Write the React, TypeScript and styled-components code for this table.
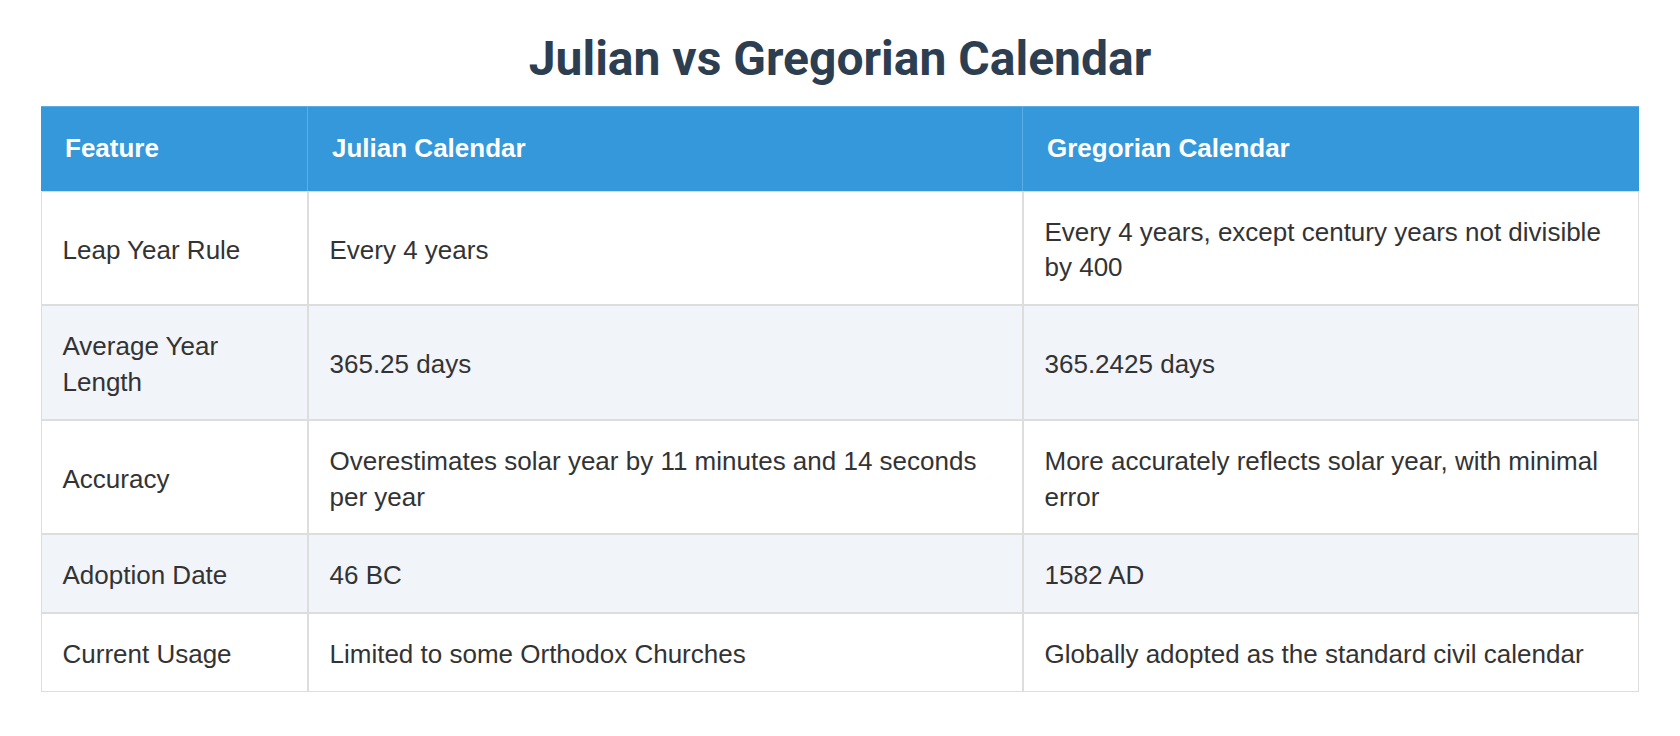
import React from "react";
import styled, { createGlobalStyle } from "styled-components";

const GlobalStyle = createGlobalStyle`
  html, body {
    margin: 0;
    padding: 0;
    background: #ffffff;
  }
  body {
    font-family: "Liberation Sans", Arial, sans-serif;
    color: #333333;
  }
`;

const Page = styled.main`
  padding: 31px 41px 40px;
  box-sizing: border-box;
  width: 1680px;
`;

const Title = styled.h1`
  margin: 0 0 19px;
  text-align: center;
  font-family: Roboto, "Liberation Sans", sans-serif;
  font-weight: 700;
  font-size: 48px;
  line-height: 56px;
  color: #2c3e50;
`;

const Table = styled.table`
  width: 100%;
  border-collapse: separate;
  border-spacing: 0;
  table-layout: fixed;
  font-size: 26px;
  line-height: 35.6px;
`;

const HeadCell = styled.th<{ $last?: boolean }>`
  background: #3498db;
  color: #ffffff;
  font-weight: 700;
  text-align: left;
  padding: 24px;
  border-top: 1px solid #5dade2;
  border-right: ${(p) => (p.$last ? "none" : "1px solid #5dade2")};
`;

const Row = styled.tr<{ $alt?: boolean }>`
  background: ${(p) => (p.$alt ? "#f1f4f9" : "#ffffff")};
`;

const Cell = styled.td`
  padding: 23.2px 20.5px 18.2px;
  border: 1.6px solid #dddddd;
  vertical-align: middle;
  color: #333333;
`;

const rows: [string, string, string][] = [
  ["Leap Year Rule", "Every 4 years", "Every 4 years, except century years not divisible by 400"],
  ["Average Year Length", "365.25 days", "365.2425 days"],
  [
    "Accuracy",
    "Overestimates solar year by 11 minutes and 14 seconds per year",
    "More accurately reflects solar year, with minimal error",
  ],
  ["Adoption Date", "46 BC", "1582 AD"],
  ["Current Usage", "Limited to some Orthodox Churches", "Globally adopted as the standard civil calendar"],
];

export default function App() {
  return (
    <>
      <GlobalStyle />
      <Page>
        <Title>Julian vs Gregorian Calendar</Title>
        <Table>
          <colgroup>
            <col style={{ width: 267 }} />
            <col style={{ width: 715 }} />
            <col style={{ width: 616 }} />
          </colgroup>
          <thead>
            <tr>
              <HeadCell>Feature</HeadCell>
              <HeadCell>Julian Calendar</HeadCell>
              <HeadCell $last>Gregorian Calendar</HeadCell>
            </tr>
          </thead>
          <tbody>
            {rows.map((r, i) => (
              <Row key={r[0]} $alt={i % 2 === 1}>
                <Cell>{r[0]}</Cell>
                <Cell>{r[1]}</Cell>
                <Cell>{r[2]}</Cell>
              </Row>
            ))}
          </tbody>
        </Table>
      </Page>
    </>
  );
}
